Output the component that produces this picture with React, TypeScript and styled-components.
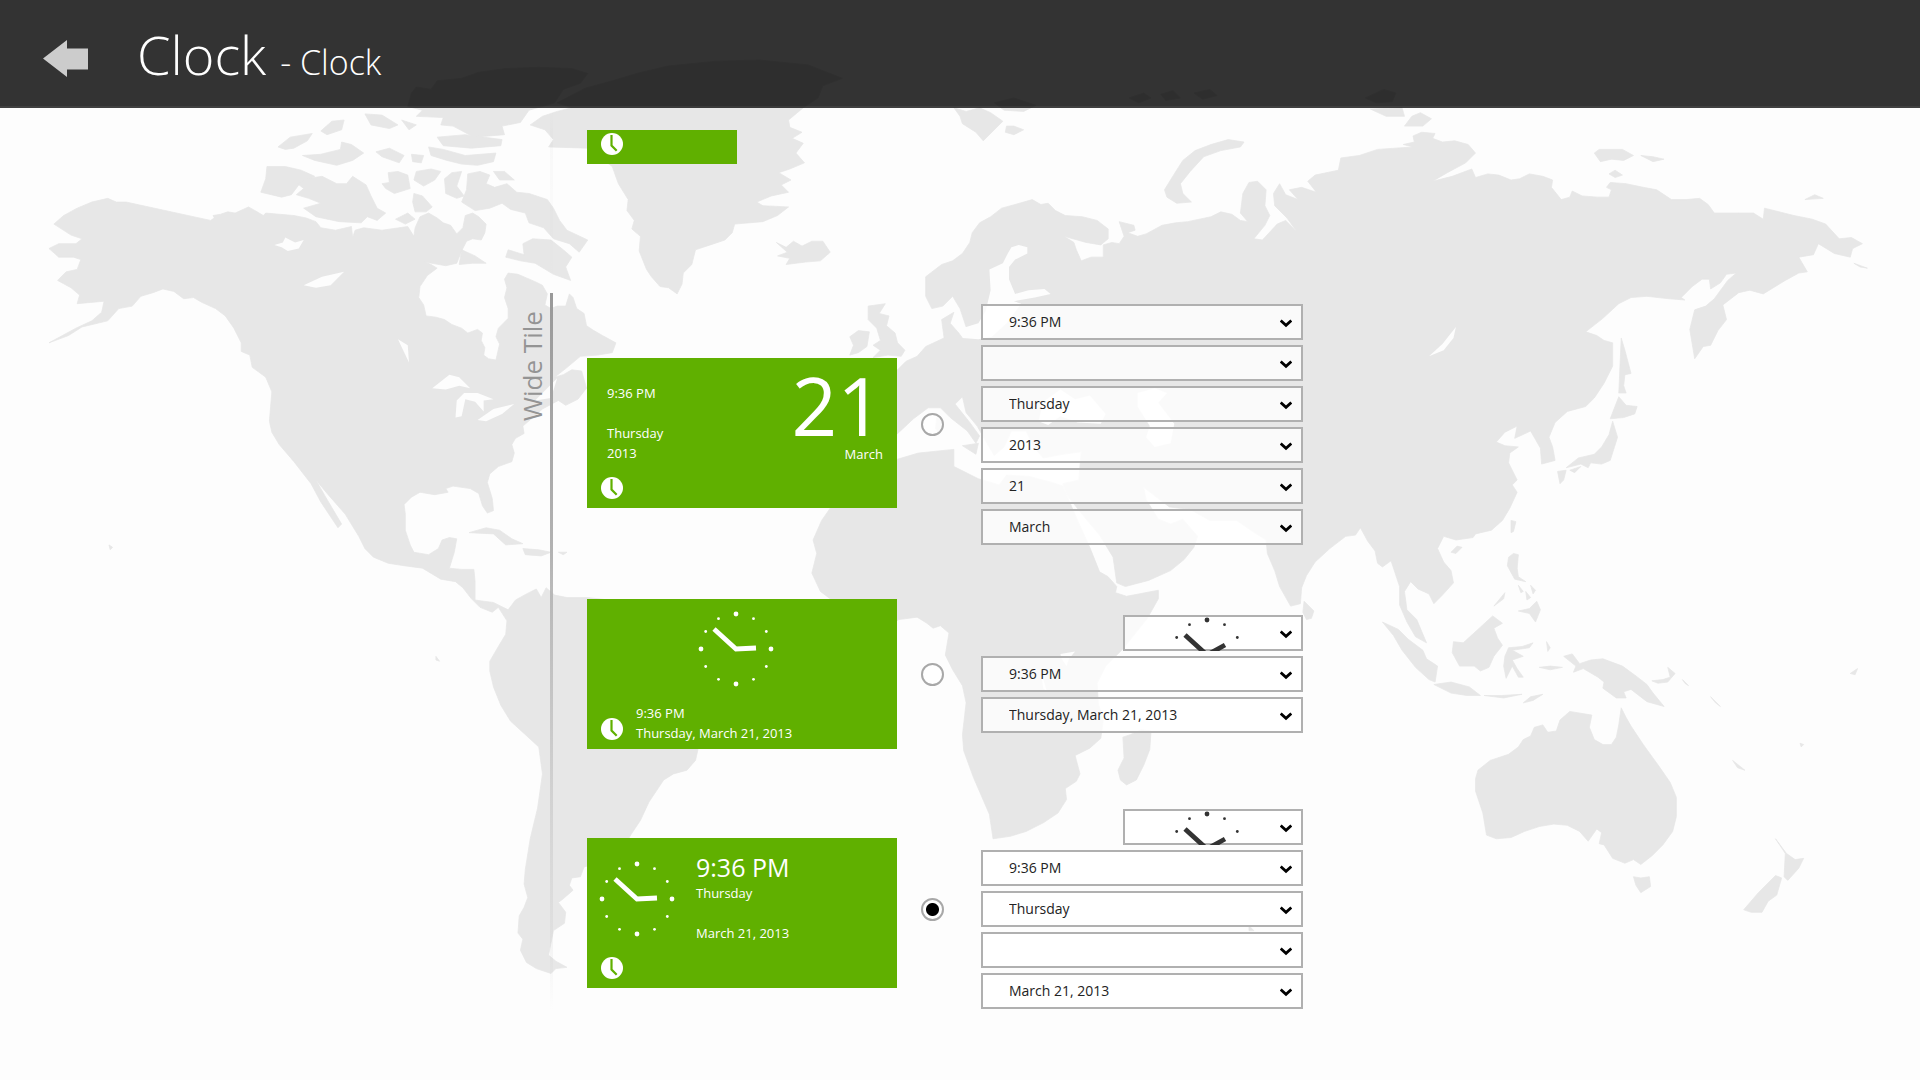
import React, { useState } from "react";
import styled, { createGlobalStyle } from "styled-components";

const GREEN = "#60b000";

const GlobalStyle = createGlobalStyle`
  *, *::before, *::after { box-sizing: border-box; }
  html, body { margin: 0; background: #fdfdfd; }
  body { font-family: "Open Sans", "Noto Sans", sans-serif; color: #222; overflow: hidden; }
`;

const Page = styled.div`
  position: relative;
  min-height: 100vh;
  isolation: isolate;
`;

const Backdrop = styled.svg`
  position: absolute;
  inset: 0;
  z-index: -1;
  width: 100%;
  height: 100%;
`;

const Header = styled.header`
  display: flex;
  align-items: center;
  gap: 45px;
  height: 108px;
  padding: 10px 39px 0;
  background: rgba(0, 0, 0, 0.8);
  background-clip: padding-box;
  border-bottom: 2px solid rgba(0, 0, 0, 0.75);
`;

const BackButton = styled.button`
  display: flex;
  align-items: center;
  margin: 0;
  padding: 0 4px;
  border: 0;
  background: none;
  cursor: pointer;
`;

const Title = styled.h1`
  margin: 0;
  font-size: 54px;
  line-height: 72px;
  font-weight: 300;
  color: #fff;
  white-space: pre;
`;

const Subtitle = styled.span`
  font-size: 34px;
`;

const Content = styled.main`
  display: grid;
  grid-template-columns: minmax(24px, 516px) auto 1fr;
`;

const Sections = styled.div`
  grid-column: 2;
`;

const Section = styled.section<{ $height?: number }>`
  display: grid;
  grid-template-columns: 34px 3px auto;
  min-height: ${(p) => (p.$height ? `${p.$height}px` : "0")};
`;

const SectionLabel = styled.h2`
  justify-self: end;
  margin: 0;
  padding: 18px 0;
  writing-mode: vertical-rl;
  transform: rotate(180deg);
  text-align: right;
  font-size: 26px;
  line-height: 36px;
  font-weight: 400;
  color: #949494;
`;

const Rule = styled.div<{ $faint?: boolean }>`
  background: ${(p) =>
    p.$faint
      ? "linear-gradient(transparent, rgba(0, 0, 0, 0.02) 20%, transparent)"
      : "linear-gradient(#999, #b2b2b2 35%, rgba(178, 178, 178, 0.4) 70%, transparent)"};
`;

const Rows = styled.div<{ $top: number }>`
  display: flex;
  flex-direction: column;
  padding: ${(p) => p.$top}px 0 0 34px;
`;

const Row = styled.div<{ $after?: number }>`
  display: flex;
  align-items: center;
  margin-bottom: ${(p) => p.$after ?? 0}px;
`;

const TileCell = styled.div<{ $drop?: number }>`
  padding-top: ${(p) => p.$drop ?? 0}px;
`;

const Tile = styled.div<{ $small?: boolean }>`
  position: relative;
  display: flex;
  width: ${(p) => (p.$small ? 150 : 310)}px;
  height: ${(p) => (p.$small ? 34 : 150)}px;
  background: ${GREEN};
  color: #fff;
  font-size: 13px;
  line-height: 20px;
`;

const Badge = styled.svg`
  position: absolute;
  left: 14px;
  bottom: 9px;
`;

const DateBody = styled.div`
  display: flex;
  flex: 1;
  justify-content: space-between;
  padding: 8px 14px 0 20px;
`;

const Lines = styled.div<{ $top?: number; $left?: number }>`
  display: flex;
  flex-direction: column;
  padding-top: ${(p) => p.$top ?? 0}px;
  padding-left: ${(p) => p.$left ?? 0}px;
`;

const Line = styled.span`
  min-height: 20px;
`;

const DayBlock = styled.div`
  display: flex;
  flex-direction: column;
  align-items: flex-end;
`;

const Day = styled.span`
  font-size: 80px;
  line-height: 78px;
`;

const StackBody = styled.div`
  display: flex;
  flex-direction: column;
  justify-content: space-between;
  flex: 1;
  padding: 12px 24px 6px 12px;
`;

const CentredDial = styled.div`
  display: flex;
  justify-content: center;
`;

const SideBody = styled.div`
  display: flex;
  flex: 1;
  align-items: flex-start;
  gap: 21px;
  padding: 14px 12px 0;
`;

const DialBox = styled.div`
  display: flex;
  padding-top: 9px;
`;

const BigTime = styled.span`
  font-size: 25px;
  line-height: 31px;
`;

const Radio = styled.input`
  appearance: none;
  flex: none;
  width: 23px;
  height: 23px;
  margin: 0 37px 0 24px;
  border: 2px solid #a8a8a8;
  border-radius: 50%;
  background: rgba(255, 255, 255, 0.8);
  &:checked {
    background: radial-gradient(circle, #000 6px, #fff 7px);
  }
`;

const Fields = styled.div`
  display: flex;
  flex-direction: column;
  align-items: flex-end;
  gap: 5px;
`;

const SelectBox = styled.div<{ $narrow?: boolean }>`
  position: relative;
  display: flex;
  width: ${(p) => (p.$narrow ? 180 : 322)}px;
  height: 36px;
  overflow: hidden;
`;

const Select = styled.select<{ $hideText?: boolean }>`
  appearance: none;
  flex: 1;
  padding: 0 26px;
  border: 2px solid #b0b0b0;
  border-radius: 0;
  background: rgba(255, 255, 255, 0.8);
  color: ${(p) => (p.$hideText ? "transparent" : "#222")};
  font-family: inherit;
  font-size: 14px;
  line-height: 20px;
`;

const Chevron = styled.svg`
  position: absolute;
  right: 11px;
  top: 15px;
  pointer-events: none;
`;

const SelectDial = styled.div`
  position: absolute;
  left: 46px;
  top: 2px;
  display: flex;
  pointer-events: none;
`;

/* World map outlines, one polygon for each land mass, on a 1568 x 882 canvas. */
const LAND = [
  // the Americas
  "44,183 52,176 63,170 75,165 88,162 95,165 103,165 172,180 175,178 174,176 180,175 186,173 192,174 203,169 210,173 215,176 217,174 240,176 250,178 258,181 262,186 274,188 287,185 288,194 290,188 297,186 312,188 333,185 338,193 339,186 343,177 350,174 357,178 362,182 368,184 373,191 378,186 380,176 386,174 391,177 397,183 396,190 393,196 386,195 381,197 377,205 373,215 364,217 347,214 352,216 357,219 349,225 343,234 342,243 346,249 348,258 356,259 363,261 369,265 377,268 382,272 390,269 394,272 393,278 396,284 395,290 399,293 405,294 408,281 405,275 407,268 415,260 415,252 412,243 414,235 412,228 415,223 423,224 437,230 443,233 447,240 445,249 450,252 455,250 462,250 465,240 468,243 471,252 477,256 479,266 485,270 492,274 503,280 500,288 488,290 474,291 462,301 453,308 460,306 467,302 475,303 479,317 472,326 462,331 456,327 443,334 434,342 427,348 428,354 421,358 418,363 420,370 418,377 407,381 400,387 398,394 402,407 403,417 398,419 394,413 391,403 384,399 370,397 364,399 366,402 355,404 343,402 336,406 330,412 331,420 331,433 335,445 338,451 350,453 358,448 361,441 367,439 373,440 371,451 367,464 377,465 387,465 388,475 388,490 395,491 403,492 415,498 421,490 430,485 438,481 442,488 446,480 453,486 463,488 480,488 540,495 600,540 575,605 570,612 568,621 561,629 550,632 542,637 530,655 523,670 515,682 505,700 477,708 474,716 467,717 465,723 468,727 460,734 456,737 462,745 461,754 452,760 450,770 448,780 454,785 463,790 454,791 450,795 438,791 430,786 425,776 427,767 423,762 424,748 428,741 431,733 428,722 429,710 433,685 439,660 443,632 440,610 428,599 417,589 409,576 403,561 400,548 400,540 407,528 413,518 414,507 407,496 402,500 392,496 385,489 378,480 372,475 360,473 345,464 330,462 317,460 305,455 298,448 293,438 282,420 268,404 258,392 266,406 279,428 276,431 262,410 254,395 240,377 228,363 222,353 220,344 222,320 217,308 206,300 204,290 197,287 197,280 191,268 184,258 176,252 165,247 158,243 150,244 142,238 133,236 125,239 115,242 108,250 97,252 88,262 67,267 56,274 40,280 62,268 75,262 83,255 85,246 74,247 63,248 65,241 58,235 47,229 54,222 63,220 66,212 60,210 48,210 40,203 48,199 62,199 67,195 58,192",
  // Greenland
  "433,102 443,95 455,91 467,88 455,84 478,72 500,66 520,60 545,54 585,50 620,49 660,53 688,64 672,70 668,80 656,88 644,98 645,104 655,108 647,113 656,117 650,125 657,133 645,138 636,141 646,147 638,151 644,157 630,160 618,165 623,168 644,169 635,176 623,181 600,183 598,190 592,196 580,200 568,204 565,216 558,223 557,232 553,240 546,235 539,234 532,226 528,220 522,205 523,193 516,187 518,180 512,172 513,163 505,150 500,136 480,121 448,120 452,114 445,106",
  // Arctic archipelago
  "333,87 336,76 340,71 352,73 357,66 377,64 391,59 413,56 440,55 467,56 480,60 474,68 460,73 453,84 432,90 425,100 410,103 412,110 387,112 370,103 360,102 362,96 340,95 345,90",
  "227,120 237,112 255,109 251,115 240,121 233,122",
  "262,107 271,99 281,98 279,106 267,110",
  "298,93 312,94 325,102 318,105 303,102",
  "328,98 340,102 334,106",
  "247,127 262,126 278,122 279,116 287,118 297,125 288,131 275,135 257,131",
  "307,124 318,121 330,127 326,133 312,128",
  "350,120 362,122 380,127 405,125 403,132 390,135 377,134 365,131 352,127",
  "357,112 380,110 410,114 409,119 385,121 362,119",
  "336,126 346,127 344,133 337,132",
  "218,136 233,136 246,139 257,144 244,151 238,159 230,161 213,157 217,146",
  "243,150 250,146 263,144 275,150 283,150 288,144 299,151 303,160 308,170 315,174 308,180 300,177 295,182 277,181 258,177 248,170 262,166 252,162 242,159 248,154",
  "312,150 318,149 317,141 325,140 333,143 335,154 322,158 315,154",
  "340,140 352,138 360,140 355,147 346,152 338,147",
  "338,158 345,160 353,169 348,173 339,173 337,165",
  "323,179 333,174 339,179 331,183",
  "363,146 369,141 377,140 373,152 379,160 373,162 364,158",
  "382,142 392,140 400,143 397,150 404,153 414,150 422,157 432,158 447,163 452,170 457,180 463,188 480,196 473,206 465,199 452,195 444,186 432,182 429,174 417,171 410,166 400,170 388,172 377,165 381,155",
  "403,140 412,140 420,147 408,147",
  "427,199 435,195 450,196 460,204 467,210 462,218 466,229 452,224 437,215 425,213 413,210 415,204 428,208",
  "377,204 388,209 397,215 386,215 375,216",
  // Caribbean
  "383,435 397,431 408,433 418,440 427,444 413,445 403,436",
  "427,448 440,449 450,451 442,454 429,453",
  "456,451 463,451 460,453",
  "89,445 92,447 90,449",
  "356,536 359,540 356,539",
  // Iceland and the British Isles
  "634,198 642,202 648,197 655,201 663,197 672,197 678,206 670,213 658,214 642,216 645,211 635,209 643,206",
  "709,250 723,248 718,256 726,258 724,266 731,272 733,280 739,286 736,291 725,290 713,292 719,286 713,282 719,278 716,268 709,261",
  "694,275 701,270 710,271 708,283 701,288 694,290 697,282",
  // Svalbard, Franz Josef Land, Novaya Zemlya, Severnaya Zemlya
  "779,88 789,91 800,88 809,92 819,99 811,107 803,115 797,108 786,101 784,95",
  "812,84 828,80 846,86 836,91 820,90",
  "822,103 828,103 836,106 828,110 821,108",
  "922,80 934,76 940,80 930,84",
  "948,77 958,74 964,80 952,82",
  "975,76 988,73 994,78 982,81",
  "951,155 959,142 966,131 976,123 989,118 1003,114 1016,116 1013,120 997,123 983,128 972,140 964,150 966,158 973,165 961,166 953,161",
  "1115,80 1130,73 1140,76 1137,83 1124,84",
  "1119,89 1145,88 1147,95 1132,95",
  "1147,103 1153,95 1160,92 1169,97 1162,103",
  // Eurasia
  "733,302 740,295 749,291 756,283 771,276 769,261 779,255 776,264 783,272 786,276 797,273 789,267 784,252 778,242 770,250 761,252 756,242 756,226 769,216 778,213 786,207 792,198 794,190 800,182 809,177 818,170 829,167 843,163 850,167 856,166 862,172 870,176 884,177 896,180 905,187 905,195 899,200 887,198 869,193 877,198 879,204 883,213 891,210 901,210 901,200 908,198 914,199 918,193 914,181 926,184 927,188 921,190 929,193 936,191 949,184 960,182 970,181 989,177 997,173 1006,175 1013,180 1019,181 1013,174 1015,158 1020,149 1027,148 1034,155 1033,168 1037,176 1033,184 1024,195 1031,196 1043,183 1050,180 1059,189 1051,178 1041,168 1040,158 1045,150 1050,159 1060,163 1053,155 1063,153 1075,157 1068,148 1074,143 1093,139 1095,129 1110,127 1125,122 1154,120 1146,118 1155,116 1154,111 1161,108 1172,109 1170,113 1178,116 1188,115 1199,118 1205,125 1197,133 1182,141 1170,148 1186,144 1202,138 1205,145 1215,142 1224,143 1234,147 1241,146 1249,142 1260,144 1268,147 1267,153 1275,163 1282,161 1284,156 1292,160 1305,161 1314,161 1316,155 1312,153 1315,149 1328,150 1342,153 1353,155 1365,163 1377,163 1388,162 1395,167 1400,174 1420,174 1432,174 1440,179 1441,170 1465,176 1480,179 1491,183 1502,195 1512,194 1521,199 1513,203 1511,210 1498,207 1485,199 1481,208 1469,210 1476,222 1469,223 1458,229 1440,240 1429,237 1420,239 1407,249 1410,261 1403,270 1397,282 1391,283 1384,293 1380,269 1384,253 1393,250 1400,244 1411,229 1418,223 1410,224 1405,231 1397,236 1396,228 1390,228 1382,234 1373,243 1376,245 1363,244 1345,242 1332,243 1322,248 1309,260 1295,271 1304,274 1310,278 1317,280 1317,299 1310,313 1302,325 1295,332 1280,336 1270,345 1265,357 1268,365 1270,376 1259,379 1258,366 1254,359 1250,352 1237,358 1239,348 1229,353 1222,361 1229,364 1240,365 1233,370 1232,378 1239,392 1235,396 1239,402 1233,415 1227,425 1218,433 1205,436 1203,439 1189,441 1179,438 1174,448 1179,459 1185,466 1187,476 1178,486 1171,493 1167,485 1158,481 1152,475 1147,483 1149,498 1157,506 1165,525 1156,520 1149,508 1143,494 1143,479 1136,458 1129,463 1125,460 1123,450 1117,442 1111,431 1107,437 1099,438 1086,448 1074,459 1067,470 1063,480 1062,493 1054,495 1045,479 1041,466 1035,452 1034,441 1023,434 1010,425 988,425 972,416 955,414 934,398 936,408 946,424 956,428 966,424 978,438 975,447 967,457 956,466 938,474 919,479 912,476 909,455 898,437 887,424 871,404 868,395 881,392 883,369 868,371 852,374 845,366 838,352 826,352 820,365 812,372 806,362 798,348 789,337 786,324 780,330 792,345 800,356 797,362 790,352 776,341 768,333 758,333 746,342 731,356 700,362 700,300",
  "786,364 799,362 797,371",
  "765,341 769,344 767,354 764,350",
  // Africa and its islands
  "700,385 733,375 750,370 779,367 779,381 799,391 816,396 822,388 840,389 859,394 868,397 880,425 890,447 898,467 905,471 912,479 911,484 920,487 946,482 946,489 937,505 917,530 903,544 896,558 897,575 901,588 899,603 890,611 878,617 882,632 879,638 870,644 871,653 864,664 852,672 838,679 825,683 811,685 808,665 795,635 787,613 786,600 789,574 786,560 778,547 772,535 775,517 768,511 762,513 757,509 749,504 734,506 720,515 700,505 678,489 670,483 663,468 667,452 664,441 671,425 678,415 690,400",
  "917,602 923,600 932,596 940,597 939,612 934,625 928,637 920,641 915,637 913,629 918,619",
  "1065,491 1073,499 1071,505 1067,506 1064,500",
  "1020,756 1024,760 1020,760",
  // Siberian islands, Sakhalin and Japan
  "1302,125 1306,122 1314,122 1325,122 1334,127 1326,131 1316,130 1307,132",
  "1340,127 1350,128 1359,130 1350,132",
  "1314,142 1319,139 1325,143 1319,145",
  "1474,163 1482,159 1489,162",
  "1514,215 1525,219 1519,218",
  "1324,276 1327,286 1332,305 1327,306 1326,315 1328,321 1322,321",
  "1322,324 1328,331 1337,332 1335,338 1326,341 1315,342",
  "1317,344 1321,357 1315,376 1308,379 1299,378 1297,382 1291,379 1279,382 1289,374 1302,371 1308,365 1314,355",
  "1272,385 1279,384 1277,392 1274,395",
  "1282,384 1291,381 1286,386",
  // South-East Asia
  "1234,435 1234,425 1238,426 1236,434",
  "1185,451 1190,446 1194,447 1189,452",
  "1232,455 1236,452 1240,453 1239,464 1240,471 1246,475 1237,473 1231,462",
  "1220,495 1229,484 1228,489",
  "1240,478 1244,483 1242,484",
  "1246,483 1250,488 1247,490",
  "1250,478 1254,482 1252,485",
  "1240,499 1249,497 1255,491 1258,498 1254,508 1249,501",
  "1129,508 1142,514 1150,522 1162,531 1165,538 1174,544 1172,557 1167,555 1156,545 1145,531 1138,519",
  "1171,559 1185,557 1200,561 1209,568 1198,568 1185,566",
  "1212,568 1226,568 1243,567 1228,570",
  "1244,574 1250,569 1260,567 1252,572",
  "1187,524 1195,525 1207,514 1219,503 1227,509 1220,513 1223,521 1227,527 1220,536 1216,545 1209,548 1204,544 1192,544 1186,533",
  "1229,536 1232,529 1243,528 1252,525 1249,529 1235,531 1244,536 1235,539 1239,546 1244,553 1240,553 1235,544 1230,554 1228,544",
  "1263,524 1266,529 1264,532",
  "1257,545 1266,544 1276,545 1266,547",
  "1277,536 1284,534 1290,542 1299,539 1309,538 1325,544 1336,552 1345,559 1350,566 1359,577 1345,573 1332,563 1326,565 1328,570 1320,570 1309,562 1310,557 1305,553 1293,546 1285,549 1287,544",
  "1349,556 1358,555 1364,553 1362,545 1368,550 1362,557 1354,558",
  "1374,555 1379,560 1376,558",
  // Oceania
  "1324,578 1328,586 1332,593 1342,608 1355,626 1364,639 1369,651 1369,667 1366,679 1358,690 1349,699 1340,706 1334,702 1327,705 1317,701 1310,690 1306,689 1308,680 1304,677 1297,687 1290,679 1280,674 1269,673 1257,675 1245,679 1234,684 1222,685 1214,682 1211,664 1205,646 1205,636 1207,629 1217,621 1232,616 1240,610 1244,604 1250,601 1253,594 1260,592 1264,598 1271,597 1274,588 1282,581 1300,584 1298,594 1302,604 1309,608 1316,608 1320,602 1322,592",
  "1334,716 1340,717 1347,716 1348,724 1340,729 1336,723",
  "1450,685 1456,693 1459,697 1466,702 1473,701 1469,709 1460,719 1457,716 1458,697",
  "1450,715 1455,717 1451,731 1444,736 1439,745 1430,745 1424,743 1436,729",
  "1415,621 1425,629 1419,627",
  "1397,569 1405,577 1401,574",
  "1511,550 1517,546 1515,551",
  "1470,607 1473,608 1471,610",
];

/* Inland seas and lakes, cut back out of the land. */
const WATER = [
  "839,202 832,200 826,202 823,207 819,215 808,220 809,237 805,254 799,264 789,267 786,276 799,277 810,275 822,264 834,248 828,246 845,243 858,240 853,236 840,237 829,240 824,228 824,218 829,212 839,207",
  "848,344 852,328 866,318 878,326 890,323 903,338 899,346 880,345 866,340 856,347",
  "929,321 943,317 953,321 946,329 959,346 956,362 943,365 936,357 939,348 929,332",
  "1189,267 1187,276 1179,286 1167,291 1178,281",
  "866,534 878,532 873,538 871,544 867,538",
  "850,548 855,565 852,562",
  "224,200 231,198 233,194 241,198 248,196 244,203 235,205 230,202",
  "248,233 263,226 281,222 270,233 258,235",
  "325,277 333,282 334,296",
  "353,317 367,306 375,308 384,317 375,315 364,318",
  "372,341 373,327 379,321 390,321 403,326 395,327 395,336 388,328 380,326 377,340",
  "390,343 403,334 420,330 410,338 397,344",
  "437,327 455,309 450,325",
];

const HANDS = { tile: "20,-1", menu: "18,-10" };

function Dial({ color, variant }: { color: string; variant: keyof typeof HANDS }) {
  const dots = Array.from({ length: 12 }, (_, i) => {
    const a = (i * Math.PI) / 6;
    return <circle key={i} cx={35 * Math.sin(a)} cy={-35 * Math.cos(a)} r={i % 3 ? 1.4 : 2.4} />;
  });
  return (
    <svg width="76" height="76" viewBox="-38 -38 76 76" fill={color} aria-hidden="true">
      {dots}
      <polyline points={`-22,-20 0,0 ${HANDS[variant]}`} fill="none" stroke={color} strokeWidth="4.8" />
    </svg>
  );
}

function ClockBadge() {
  return (
    <Badge width="22" height="22" viewBox="-11 -11 22 22" aria-hidden="true">
      <circle r="11" fill="#fff" />
      <path d="M-.5-9V1.500L4.700 6.700" fill="none" stroke={GREEN} strokeWidth="2.200" />
    </Badge>
  );
}

interface FieldProps {
  label: string;
  value: string;
  dial?: boolean;
}

function Field({ label, value, dial }: FieldProps) {
  return (
    <SelectBox $narrow={dial}>
      <Select aria-label={label} defaultValue={value} $hideText={dial}>
        <option value={value}>{value}</option>
      </Select>
      {dial && (
        <SelectDial>
          <Dial color="#333" variant="menu" />
        </SelectDial>
      )}
      <Chevron width="12" height="9" viewBox="0 0 12 9" aria-hidden="true">
        <path d="M.7 1.500 6 6.300 11.300 1.500" fill="none" stroke="#000" strokeWidth="2.800" />
      </Chevron>
    </SelectBox>
  );
}

export default function App() {
  const [layout, setLayout] = useState("side");
  const radio = (id: string, label: string) => (
    <Radio
      type="radio"
      name="wide-layout"
      aria-label={label}
      checked={layout === id}
      onChange={() => setLayout(id)}
    />
  );

  return (
    <Page>
      <GlobalStyle />
      <Backdrop viewBox="0 0 1568 882" preserveAspectRatio="xMidYMid slice" aria-hidden="true">
        <g fill="#e7e7e7" stroke="#e7e7e7" strokeWidth="0.6" strokeLinejoin="round">
          {LAND.map((points) => (
            <polygon key={points} points={points} />
          ))}
        </g>
        <g fill="#fdfdfd">
          {WATER.map((points) => (
            <polygon key={points} points={points} />
          ))}
        </g>
      </Backdrop>

      <Header>
        <BackButton aria-label="Back">
          <svg width="45" height="37" viewBox="0 0 45 37" aria-hidden="true">
            <path d="M0 18.500 24 0v8.500h21v21H24V37Z" fill="#ccc" />
          </svg>
        </BackButton>
        <Title>
          Clock <Subtitle>- Clock</Subtitle>
        </Title>
      </Header>

      <Content>
        <Sections>
          <Section $height={185}>
            <span />
            <Rule $faint />
            <Rows $top={22}>
              <Tile $small>
                <ClockBadge />
              </Tile>
            </Rows>
          </Section>

          <Section $height={717}>
            <SectionLabel>Wide Tile</SectionLabel>
            <Rule />
            <Rows $top={11}>
              <Row $after={54}>
                <TileCell $drop={16}>
                  <Tile>
                    <DateBody>
                      <Lines $top={17}>
                        <Line>9:36 PM</Line>
                        <Line />
                        <Line>Thursday</Line>
                        <Line>2013</Line>
                      </Lines>
                      <DayBlock>
                        <Day>21</Day>
                        <Line>March</Line>
                      </DayBlock>
                    </DateBody>
                    <ClockBadge />
                  </Tile>
                </TileCell>
                {radio("date", "Date layout")}
                <Fields>
                  <Field label="Line 1" value="9:36 PM" />
                  <Field label="Line 2" value="" />
                  <Field label="Line 3" value="Thursday" />
                  <Field label="Line 4" value="2013" />
                  <Field label="Large text" value="21" />
                  <Field label="Caption" value="March" />
                </Fields>
              </Row>

              <Row $after={60}>
                <TileCell>
                  <Tile>
                    <StackBody>
                      <CentredDial>
                        <Dial color="#fff" variant="tile" />
                      </CentredDial>
                      <Lines $left={37}>
                        <Line>9:36 PM</Line>
                        <Line>Thursday, March 21, 2013</Line>
                      </Lines>
                    </StackBody>
                    <ClockBadge />
                  </Tile>
                </TileCell>
                {radio("stack", "Clock above text")}
                <Fields>
                  <Field label="Clock face" value="Analog" dial />
                  <Field label="Line 1" value="9:36 PM" />
                  <Field label="Line 2" value="Thursday, March 21, 2013" />
                </Fields>
              </Row>

              <Row>
                <TileCell $drop={8}>
                  <Tile>
                    <SideBody>
                      <DialBox>
                        <Dial color="#fff" variant="tile" />
                      </DialBox>
                      <Lines>
                        <BigTime>9:36 PM</BigTime>
                        <Line>Thursday</Line>
                        <Line />
                        <Line>March 21, 2013</Line>
                      </Lines>
                    </SideBody>
                    <ClockBadge />
                  </Tile>
                </TileCell>
                {radio("side", "Clock beside text")}
                <Fields>
                  <Field label="Clock face" value="Analog" dial />
                  <Field label="Heading" value="9:36 PM" />
                  <Field label="Line 1" value="Thursday" />
                  <Field label="Line 2" value="" />
                  <Field label="Line 3" value="March 21, 2013" />
                </Fields>
              </Row>
            </Rows>
          </Section>
        </Sections>
      </Content>
    </Page>
  );
}
